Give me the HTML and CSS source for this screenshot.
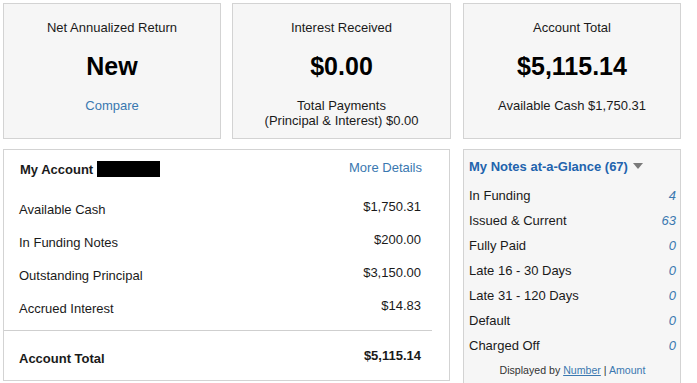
FILE: index.html
```html
<!DOCTYPE html>
<html lang="en">

<head>
    <meta charset="UTF-8">
    <meta name="viewport" content="width=device-width, initial-scale=1.0">
    <title>Account Summary</title>
    <link rel="stylesheet" href="styles.css">
</head>

<body>
    <div class="dashboard">
        <div class="summary-pair">
            <section class="summary-box">
                <h2>Net Annualized Return</h2>
                <div class="summary-value">New</div>
                <a href="#" class="summary-link">Compare</a>
            </section>
            <section class="summary-box wide">
                <h2>Interest Received</h2>
                <div class="summary-value">$0.00</div>
                <p class="summary-sub">Total Payments<br>(Principal &amp; Interest) $0.00</p>
            </section>
        </div>

        <section class="summary-box">
            <h2>Account Total</h2>
            <div class="summary-value">$5,115.14</div>
            <p class="summary-sub">Available Cash $1,750.31</p>
        </section>

        <section class="account-box">
            <div class="account-header">
                <h3>My Account <span class="redacted"></span></h3>
                <a href="#" class="more-link">More Details</a>
            </div>
            <ul class="account-rows">
                <li><span class="row-label">Available Cash</span><span class="row-value">$1,750.31</span></li>
                <li><span class="row-label">In Funding Notes</span><span class="row-value">$200.00</span></li>
                <li><span class="row-label">Outstanding Principal</span><span class="row-value">$3,150.00</span></li>
                <li><span class="row-label">Accrued Interest</span><span class="row-value">$14.83</span></li>
            </ul>
            <hr class="divider">
            <div class="account-total">
                <span class="row-label">Account Total</span><span class="row-value">$5,115.14</span>
            </div>
        </section>

        <aside class="glance-panel">
            <h3>My Notes at-a-Glance (67) <span class="caret"></span></h3>
            <ul class="glance-rows">
                <li><span>In Funding</span><a href="#">4</a></li>
                <li><span>Issued &amp; Current</span><a href="#">63</a></li>
                <li><span>Fully Paid</span><a href="#">0</a></li>
                <li><span>Late 16 - 30 Days</span><a href="#">0</a></li>
                <li><span>Late 31 - 120 Days</span><a href="#">0</a></li>
                <li><span>Default</span><a href="#">0</a></li>
                <li><span>Charged Off</span><a href="#">0</a></li>
            </ul>
            <p class="glance-footer">Displayed by <a href="#" class="active">Number</a> | <a href="#">Amount</a></p>
        </aside>
    </div>
</body>

</html>
```

FILE: styles.css
```css
/* --- Base --- */
:root {
    --text-color: #1a1a1a;
    --link-color: #3a78b0;
    --heading-blue: #2263ad;
    --panel-bg: #f6f6f6;
    --border-color: #d3d3d3;
    --font-family: 'Liberation Sans', Arial, sans-serif;
}

body {
    margin: 0;
    height: 383px;
    background: #ffffff;
    color: var(--text-color);
    font-family: var(--font-family);
    font-size: 13px;
    line-height: 16px;
    overflow: hidden;
}

a {
    color: var(--link-color);
    text-decoration: none;
}

ul {
    list-style: none;
    margin: 0;
    padding: 0;
}

.dashboard {
    display: grid;
    grid-template-columns: 448px 218px;
    column-gap: 12px;
    row-gap: 10px;
    padding: 3px 0 0 3px;
}

/* --- Summary boxes --- */
.summary-pair {
    display: flex;
    justify-content: space-between;
}

.summary-box {
    box-sizing: border-box;
    width: 218px;
    height: 136px;
    padding-top: 16px;
    background: var(--panel-bg);
    border: 1px solid var(--border-color);
    text-align: center;
}

.summary-box.wide {
    width: 219px;
}

.summary-box h2 {
    margin: 0;
    font-size: 13px;
    font-weight: normal;
    line-height: 16px;
}

.summary-value {
    margin-top: 15px;
    font-size: 25px;
    font-weight: bold;
    line-height: 30px;
    color: #000;
}

.summary-link {
    display: inline-block;
    margin-top: 17px;
}

.summary-sub {
    margin: 17px 0 0;
    line-height: 15px;
}

/* --- My Account --- */
.account-box {
    box-sizing: border-box;
    width: 447px;
    height: 232px;
    padding-top: 11px;
    background: #fff;
    border: 1px solid var(--border-color);
}

.account-header {
    display: flex;
    justify-content: space-between;
    padding: 0 27px 0 16px;
}

.account-header h3 {
    margin: 0;
    font-size: 13px;
    line-height: 16px;
}

.redacted {
    display: inline-block;
    width: 63px;
    height: 16px;
    background: #000;
    vertical-align: -3px;
}

.more-link {
    margin-top: -1px;
}

.account-rows {
    margin-top: 20px;
    padding: 0 28px 0 15px;
}

.account-rows li,
.account-total {
    display: flex;
    justify-content: space-between;
    height: 33px;
}

.row-label {
    padding-top: 4px;
}

.row-value {
    padding-top: 1px;
}

.divider {
    margin: 0 17px 0 0;
    border: none;
    border-top: 1px solid #cfcfcf;
}

.account-total {
    padding: 16px 28px 0 15px;
    font-weight: bold;
}

/* --- Notes at a glance --- */
.glance-panel {
    box-sizing: border-box;
    width: 218px;
    height: 234px;
    padding: 9px 4px 0 5px;
    background: var(--panel-bg);
    border: 1px solid var(--border-color);
    border-bottom: none;
}

.glance-panel h3 {
    margin: 0;
    font-size: 13px;
    line-height: 16px;
    color: var(--heading-blue);
}

.caret {
    display: inline-block;
    width: 0;
    height: 0;
    margin-left: 1px;
    border-left: 5px solid transparent;
    border-right: 5px solid transparent;
    border-top: 6px solid #7a7a7a;
    vertical-align: 2px;
}

.glance-rows {
    margin-top: 8px;
}

.glance-rows li {
    display: flex;
    justify-content: space-between;
    line-height: 25px;
}

.glance-rows a {
    font-style: italic;
}

.glance-footer {
    margin: 4px 0 0;
    font-size: 10.6px;
    text-align: center;
    color: #333;
}

.glance-footer a.active {
    text-decoration: underline;
}
```
